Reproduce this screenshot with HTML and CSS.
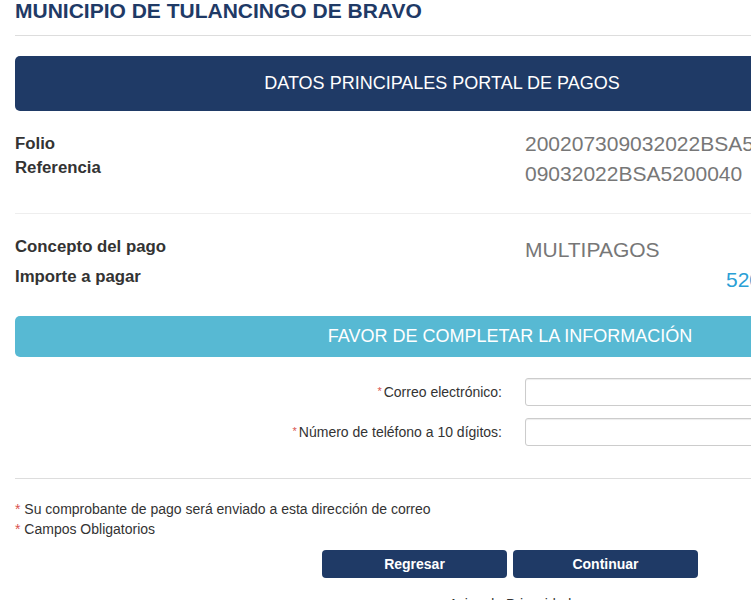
FILE: index.html
```html
<!DOCTYPE html>
<html lang="es">
<head>
<meta charset="utf-8">
<title>Portal de Pagos</title>
<link rel="stylesheet" href="styles.css">
</head>
<body>
<div class="page">
  <h1 class="title">MUNICIPIO DE TULANCINGO DE BRAVO</h1>
  <hr class="rule">
  <div class="bar bar-dark">DATOS PRINCIPALES PORTAL DE PAGOS</div>

  <div class="data data-top">
    <div class="labels">
      <div class="label">Folio</div>
      <div class="label">Referencia</div>
    </div>
    <div class="values">
      <div class="value">200207309032022BSA5200040</div>
      <div class="value">09032022BSA5200040</div>
    </div>
  </div>
  <hr class="rule rule-light">
  <div class="data data-bottom">
    <div class="labels">
      <div class="label">Concepto del pago</div>
      <div class="label">Importe a pagar</div>
    </div>
    <div class="values">
      <div class="value">MULTIPAGOS</div>
      <div class="value amount">520.00</div>
    </div>
  </div>

  <div class="bar bar-light">FAVOR DE COMPLETAR LA INFORMACIÓN</div>

  <form class="form">
    <div class="field">
      <label class="field-label" for="correo"><span class="req">*</span>Correo electrónico:</label>
      <input class="input" id="correo" type="text">
    </div>
    <div class="field">
      <label class="field-label" for="tel"><span class="req">*</span>Número de teléfono a 10 dígitos:</label>
      <input class="input" id="tel" type="text">
    </div>
  </form>
  <hr class="rule rule-form">
  <div class="notes">
    <div class="note"><span class="req">*</span> Su comprobante de pago será enviado a esta dirección de correo</div>
    <div class="note"><span class="req">*</span> Campos Obligatorios</div>
  </div>
  <div class="actions">
    <button class="btn" type="button">Regresar</button>
    <button class="btn" type="button">Continuar</button>
  </div>
  <div class="privacy">Aviso de Privacidad</div>
</div>
</body>
</html>
```
FILE: styles.css
```css
html, body {
  margin: 0;
  padding: 0;
  overflow: hidden;
  background: #fff;
}
body {
  font-family: "Liberation Sans", Arial, sans-serif;
  color: #333;
  width: 751px;
  height: 600px;
}
.page {
  width: 990px;
  padding: 0 15px;
}
.title {
  margin: 0;
  font-size: 21px;
  line-height: 22px;
  font-weight: bold;
  color: #1f3a66;
}
.rule {
  border: 0;
  border-top: 1px solid #dddddd;
  margin: 13px 0 20px 0;
}
.rule-light {
  border-top-color: #eeeeee;
  margin: 0;
}
.bar {
  color: #fff;
  text-align: center;
  border-radius: 5px;
}
.bar-dark {
  background: #1f3a66;
  width: 854px;
  height: 55px;
  line-height: 55px;
  font-size: 18px;
}
.bar-light {
  background: #57b9d3;
  height: 41px;
  line-height: 41px;
  font-size: 18px;
  margin-top: 29px;
}
.data {
  display: grid;
  grid-template-columns: 510px 1fr;
}
.data-top {
  padding: 21px 0 22px 0;
  height: 59px;
}
.data-bottom {
  padding: 18px 0 0 0;
  height: 73px;
  box-sizing: border-box;
}
.label {
  font-size: 16.8px;
  font-weight: bold;
  line-height: 24px;
}
.data-bottom .label {
  line-height: 30px;
}
.value {
  font-size: 21px;
  color: #777;
  line-height: 30px;
}
.data-top .values {
  margin-top: -3px;
}
.data-bottom .values {
  margin-top: 3px;
}
.amount {
  color: #2a9fd6;
  padding-left: 201px;
}
.form {
  padding-top: 21px;
  display: flex;
  flex-direction: column;
  gap: 12px;
}
.field {
  display: grid;
  grid-template-columns: 487px 400px;
  column-gap: 23px;
  align-items: center;
}
.field-label {
  text-align: right;
  font-size: 14px;
  color: #333;
}
.req {
  color: #d9534f;
  font-size: 11px;
  vertical-align: 2px;
  margin-right: 2px;
}
.input {
  height: 28px;
  box-sizing: border-box;
  border: 1px solid #cccccc;
  border-radius: 3px;
  box-shadow: inset 0 1px 1px rgba(0,0,0,0.075);
  margin: 0;
}
.rule-form {
  margin: 32px 0 0 0;
}
.notes {
  padding-top: 20px;
}
.note {
  font-size: 14px;
  line-height: 20px;
}
.note .req {
  font-size: 14px;
  vertical-align: 0;
  margin-right: 0;
}
.actions {
  display: flex;
  justify-content: center;
  gap: 6px;
  margin-top: 11px;
}
.btn {
  width: 185px;
  height: 28px;
  background: #1f3a66;
  color: #fff;
  border: 0;
  border-radius: 4px;
  font-family: "Liberation Sans", Arial, sans-serif;
  font-weight: bold;
  font-size: 14px;
  padding: 0;
}
.privacy {
  text-align: center;
  font-size: 14px;
  margin-top: 16px;
  line-height: 20px;
}
```
